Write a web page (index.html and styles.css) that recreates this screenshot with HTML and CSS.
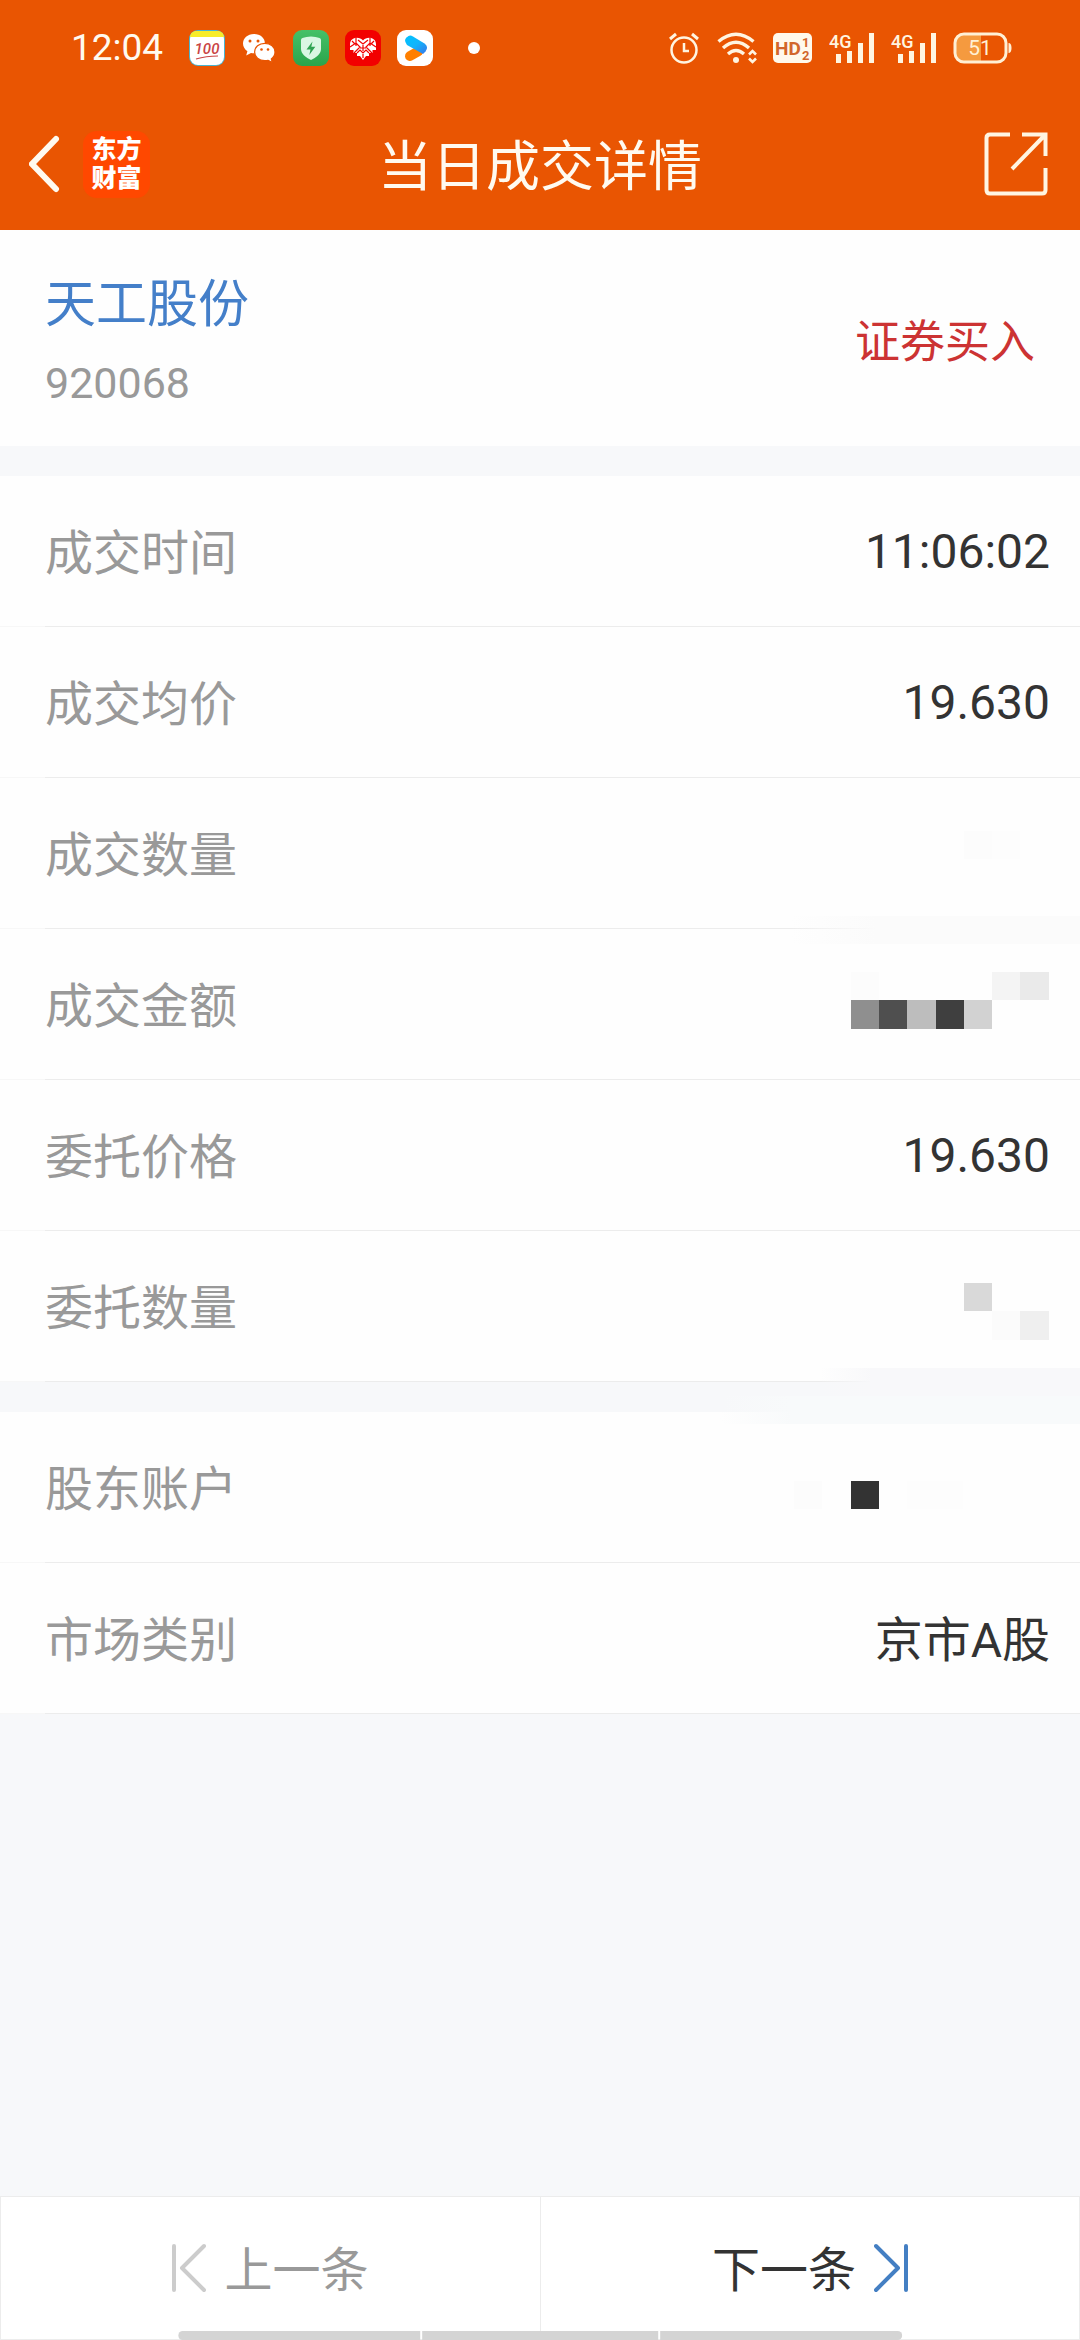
FILE: index.html
```html
<!DOCTYPE html>
<html lang="zh-CN">
<head>
    <meta charset="UTF-8">
    <meta name="viewport" content="width=device-width, initial-scale=1.0">
    <title>当日成交详情</title>
    <link rel="stylesheet" href="styles.css">
</head>
<body>

    <header class="header">
        <!-- Status bar -->
        <div class="status">
            <span class="clock">12:04</span>
            <div class="apps">
                <svg width="36" height="36" viewBox="0 0 36 36">
                    <rect width="36" height="36" rx="9" fill="#49b4cf"/>
                    <rect x="1" y="1" width="34" height="34" rx="8" fill="#fff"/>
                    <path d="M1 7V7a6 6 0 0 1 6-6H29a6 6 0 0 1 6 6Z" fill="#f8ec28"/>
                    <text x="18" y="24" class="hundred" text-anchor="middle">100</text>
                    <path d="M7 29Q17 26 29 26" stroke="#c94444" stroke-width="1.2" fill="none"/>
                </svg>
                <svg width="36" height="36" viewBox="0 0 36 36">
                    <path d="M13 4C6.500 4 2 8.300 2 13.600c0 3.200 1.700 5.900 4.400 7.600L5.200 25.500l4.800-2.600c1 .3 2 .4 3 .4C19.500 23.300 24 19 24 13.600S19.500 4 13 4Z" fill="#fff"/>
                    <path d="M23.800 13.300c-5.800 0-10.200 3.800-10.200 8.700s4.400 8.700 10.200 8.700c1.200 0 2.300-.1 3.300-.4l4.300 2.300-1.100-3.700c2.300-1.600 3.700-4.100 3.700-6.900 0-4.900-4.400-8.700-10.200-8.700Z" fill="#fff" stroke="#e95502" stroke-width="1.200"/>
                    <g fill="#e95502"><circle cx="9" cy="11" r="1.500"/><circle cx="17" cy="11" r="1.500"/><circle cx="20.500" cy="19.500" r="1.300"/><circle cx="27" cy="19.500" r="1.300"/></g>
                </svg>
                <svg width="36" height="36" viewBox="0 0 36 36">
                    <defs>
                        <linearGradient id="green" x2="0" y2="1"><stop stop-color="#45c168"/><stop offset="1" stop-color="#2aa44b"/></linearGradient>
                    </defs>
                    <rect width="36" height="36" rx="9" fill="url(#green)"/>
                    <path d="M18 6.500c3 0 6 .8 8.500 1.500q1.500.5 1.500 2v9c0 5-5 8.500-10 11-5-2.500-10-6-10-11v-9q0-1.500 1.500-2C12 7.300 15 6.500 18 6.500Z" fill="#d9f7e3"/>
                    <path d="M19.500 11.500 13.500 19.500h4l-1.200 5.500 6-8.200h-4Z" fill="#2fa352"/>
                </svg>
                <svg width="36" height="36" viewBox="0 0 36 36">
                    <rect width="36" height="36" rx="9" fill="#f20000"/>
                    <path d="M18 10.500C14.500 6 5 6.500 5 14.500v5.500h3.500v3h3.500v3h3l3 4 3-4h3v-3h3.500v-3H31v-5.500C31 6.500 21.500 6 18 10.500Z" fill="#fff"/>
                    <path d="M11 7v9M25 7v9M5 17l6-4 4 4-6 6M31 17l-6-4-4 4 6 6M13 10l5 4 5-4M18 15v6M15 18h6M12 23l3-3 3 3 3-3 3 3M18 24v4M7 11l3 3M29 11l-3 3" stroke="#f20000" stroke-width="1.200" fill="none"/>
                </svg>
                <svg width="36" height="36" viewBox="0 0 36 36">
                    <defs>
                        <linearGradient id="blue" x2="1" y2="1"><stop stop-color="#00c3ff"/><stop offset=".5" stop-color="#12b4fb"/><stop offset="1" stop-color="#3875e8"/></linearGradient>
                    </defs>
                    <rect width="36" height="36" rx="9" fill="#fff"/>
                    <path d="M13 26 21 21.500" stroke="#ff7f00" stroke-width="10" stroke-linecap="round"/>
                    <path d="M11.500 6Q13.500 5 16 6.500L27.500 13.500Q32 17 28.500 21.500L26 24 10 15Q5.500 9 11.500 6Z" fill="url(#blue)"/>
                </svg>
            </div>
            <span class="dot"></span>
            <div class="signals">
                <svg width="32" height="32" viewBox="0 0 32 32" fill="none" stroke="#fff5e1">
                    <circle cx="15" cy="18" r="12.500" stroke-width="2.500"/>
                    <path d="M1 7 7 2M29 7 23 2" stroke-width="3"/>
                    <path d="M15 11v8h5" stroke-width="2.500"/>
                </svg>
                <svg width="40" height="32" viewBox="0 0 40 32" fill="none" stroke="#fff5e1" stroke-width="3.400">
                    <path d="M1.500 9.500Q19 -5 36.500 9.500M6 16Q19 4.500 32 16M11 22Q19 15 27 22"/>
                    <circle cx="19" cy="28" r="3" fill="#fff5e1" stroke="none"/>
                    <path d="M32 22.500 35.500 19 39 22.500M32 26.500 35.500 30 39 26.500" stroke-width="2.600"/>
                </svg>
                <svg width="40" height="32" viewBox="0 0 40 32">
                    <rect x="0" y="1" width="39" height="30" rx="5" fill="#fff9ec"/>
                    <text x="2" y="23" class="hd">HD</text>
                    <text x="29" y="15" class="hd-small">1</text>
                    <text x="29" y="28" class="hd-small">2</text>
                </svg>
                <svg width="46" height="32" viewBox="0 0 46 32" fill="#fff5e1">
                    <text x="0" y="16" class="net">4G</text>
                    <path d="M7 22h5v9H7ZM18 19h5v12h-5ZM29 11h5v20h-5ZM40 1h5v30h-5Z"/>
                </svg>
                <svg width="46" height="32" viewBox="0 0 46 32" fill="#fff5e1">
                    <text x="0" y="16" class="net">4G</text>
                    <path d="M7 22h5v9H7ZM18 19h5v12h-5ZM29 11h5v20h-5ZM40 1h5v30h-5Z"/>
                </svg>
                <svg width="60" height="32" viewBox="0 0 60 32">
                    <path d="M28 3H12Q3 3 3 12v8q0 9 9 9H28Z" fill="#f59a3f"/>
                    <rect x="2" y="2" width="51" height="28" rx="9" fill="none" stroke="#fff0d5" stroke-width="3"/>
                    <path d="M55.500 11q3 0 3 5t-3 5Z" fill="#fff0d5"/>
                    <text x="27" y="23" text-anchor="middle" class="charge">51</text>
                </svg>
            </div>
        </div>

        <!-- Title bar -->
        <nav class="nav">
            <div class="nav-left">
                <button class="icon-btn" type="button" aria-label="返回">
                    <svg width="32" height="58" viewBox="0 0 32 58">
                        <path d="M27 4 3 29 27 54" fill="none" stroke="#fffaf0" stroke-width="6" stroke-linecap="round"/>
                    </svg>
                </button>
                <span class="logo">东方<br>财富</span>
            </div>
            <h1 class="title">当日成交详情</h1>
            <button class="icon-btn share" type="button" aria-label="分享">
                <svg width="67" height="64" viewBox="0 0 67 64" fill="none" stroke="#fff5e1" stroke-width="4">
                    <path d="M26 2.500H6Q2.500 2.500 2.500 6V58Q2.500 61.500 6 61.500H58Q61.500 61.500 61.500 58V36"/>
                    <path d="M38 2.500H61.500V24M61 3 28 37"/>
                </svg>
            </button>
        </nav>
    </header>

    <main class="main">
        <section class="stock">
            <div class="stock-info">
                <a class="stock-name" href="#">天工股份</a>
                <p class="stock-code">920068</p>
            </div>
            <span class="side">证券买入</span>
        </section>

        <dl class="group">
            <div class="row">
                <dt>成交时间</dt>
                <dd>11:06:02</dd>
            </div>
            <div class="row">
                <dt>成交均价</dt>
                <dd>19.630</dd>
            </div>
            <div class="row">
                <dt>成交数量</dt>
                <dd>
                    <svg class="mask" width="280" height="150" viewBox="0 0 280 150">
                        <rect x="194" y="53" width="28" height="28" fill="#fcfcfc"/>
                        <rect x="222" y="53" width="28" height="28" fill="#fdfdfd"/>
                    </svg>
                    <span class="smear"></span>
                </dd>
            </div>
            <div class="row">
                <dt>成交金额</dt>
                <dd>
                    <svg class="mask" width="280" height="150" viewBox="0 0 280 150">
                        <rect x="81" y="43" width="28" height="28" fill="#fcfcfc"/>
                        <rect x="222" y="43" width="28" height="28" fill="#f4f4f4"/>
                        <rect x="250" y="43" width="29" height="28" fill="#eaeaea"/>
                        <rect x="81" y="71" width="28" height="29" fill="#8f8f8f"/>
                        <rect x="109" y="71" width="28" height="29" fill="#4f4f4f"/>
                        <rect x="137" y="71" width="29" height="29" fill="#bdbdbd"/>
                        <rect x="166" y="71" width="28" height="29" fill="#3f3f3f"/>
                        <rect x="194" y="71" width="28" height="29" fill="#d2d2d2"/>
                    </svg>
                </dd>
            </div>
            <div class="row">
                <dt>委托价格</dt>
                <dd>19.630</dd>
            </div>
            <div class="row">
                <dt>委托数量</dt>
                <dd>
                    <svg class="mask" width="280" height="150" viewBox="0 0 280 150">
                        <rect x="194" y="52" width="28" height="28" fill="#d9d9d9"/>
                        <rect x="222" y="80" width="28" height="29" fill="#fbfbfb"/>
                        <rect x="250" y="80" width="29" height="29" fill="#efefef"/>
                    </svg>
                    <span class="smear smear-top"></span>
                    <span class="smear smear-bottom"></span>
                </dd>
            </div>
        </dl>

        <dl class="group">
            <div class="row">
                <dt>股东账户</dt>
                <dd>
                    <svg class="mask" width="280" height="150" viewBox="0 0 280 150">
                        <rect x="24" y="69" width="28" height="28" fill="#fcfcfc"/>
                        <rect x="81" y="69" width="28" height="28" fill="#333"/>
                        <rect x="137" y="69" width="56" height="28" fill="#fdfdfd"/>
                    </svg>
                </dd>
            </div>
            <div class="row">
                <dt>市场类别</dt>
                <dd class="cjk">京市A股</dd>
            </div>
        </dl>
    </main>

    <footer class="pager">
        <button class="pager-btn prev" type="button">
            <svg width="34" height="50" viewBox="0 0 34 50" fill="none" stroke="#ccc" stroke-width="4" stroke-linecap="round" stroke-linejoin="round">
                <path d="M2 3V47M32 3 10 25 32 47"/>
            </svg>
            <span class="cjk">上一条</span>
        </button>
        <button class="pager-btn next" type="button">
            <span class="cjk">下一条</span>
            <svg width="34" height="50" viewBox="0 0 34 50" fill="none" stroke="#447fc3" stroke-width="4" stroke-linecap="round" stroke-linejoin="round">
                <path d="M32 3V47M2 3 24 25 2 47"/>
            </svg>
        </button>
        <div class="gesture">
            <span></span>
            <span></span>
            <span></span>
        </div>
    </footer>

</body>
</html>
```
FILE: styles.css
```css
* {
    box-sizing: border-box;
}

body {
    margin: 0;
    min-height: 100vh;
    display: flex;
    flex-direction: column;
    background: #f7f8fa;
    color: #333;
    font-family: Roboto, "Noto Sans CJK SC", sans-serif;
    font-size: 48px;
}

button {
    border: none;
    background: none;
    padding: 0;
    font: inherit;
    color: inherit;
    cursor: pointer;
}

svg {
    display: block;
}

/* Header */
.header {
    background: #e95502;
    color: #fffaf0;
}

.status {
    display: flex;
    align-items: center;
    height: 102px;
    padding: 0 67px 6px 71px;
}

.clock {
    width: 118px;
    font-size: 37px;
    line-height: 48px;
}

.apps {
    display: flex;
    gap: 16px;
}

.dot {
    width: 12px;
    height: 12px;
    margin-left: 35px;
    border-radius: 50%;
    background: #fff;
}

.signals {
    display: flex;
    gap: 16px;
    margin-left: auto;
}

.hundred {
    font: italic 500 15px Roboto, sans-serif;
    fill: #c94444;
}

.hd {
    font: 700 19px Roboto, sans-serif;
    fill: #d2662b;
}

.hd-small {
    font: 700 13px Roboto, sans-serif;
    fill: #d2662b;
}

.net {
    font: 500 18px Roboto, sans-serif;
}

.charge {
    font: 400 21px Roboto, sans-serif;
    fill: #fff0d5;
}

.nav {
    display: grid;
    grid-template-columns: 1fr auto 1fr;
    align-items: center;
    height: 128px;
    padding: 0 29px 4px;
}

.nav-left {
    display: flex;
    align-items: center;
    gap: 22px;
}

.logo {
    width: 67px;
    height: 67px;
    padding-top: 4px;
    border-radius: 14px;
    background: #ff4800;
    color: #fff;
    font-size: 25px;
    font-weight: 900;
    line-height: 29px;
    text-align: center;
}

.title {
    margin: 0;
    padding-top: 8px;
    font-size: 54px;
    font-weight: 400;
    line-height: 64px;
}

.share {
    justify-self: end;
}

/* Stock summary */
.stock {
    display: flex;
    align-items: center;
    justify-content: space-between;
    height: 216px;
    padding: 0 45px;
    background: #fefefe;
}

.stock-info {
    padding-top: 6px;
}

.stock-name {
    display: block;
    color: #447fc9;
    font-size: 51px;
    line-height: 76px;
    text-decoration: none;
}

.stock-code {
    margin: 8px 0 0;
    color: #999;
    font-size: 43px;
    line-height: 64px;
}

.side {
    color: #cc3333;
    font-size: 45px;
}

/* Detail rows */
.group {
    margin: 30px 0 0;
    background: #fefefe;
}

.row {
    position: relative;
    display: flex;
    align-items: center;
    justify-content: space-between;
    height: 151px;
    padding: 0 30px 0 45px;
    border-bottom: 1px solid #f7f7f7;
}

.row::after {
    content: "";
    position: absolute;
    left: 45px;
    right: 0;
    bottom: -1px;
    height: 1px;
    background: #ececec;
}

.row dt {
    color: #999;
}

.row dd {
    margin: 0;
}

.row dt,
.cjk {
    padding-bottom: 4px;
}

/* Faded strips that lie over the row border */
.smear {
    position: absolute;
    z-index: 1;
    right: 0;
    bottom: -16px;
    width: 290px;
    height: 28px;
    background: linear-gradient(to right, transparent, #fbfbfb 30%);
}

.smear-top {
    bottom: -15px;
    width: 260px;
    background: linear-gradient(to right, transparent, #f8f8fa 20%);
}

.smear-bottom {
    bottom: -43px;
    width: 360px;
    background: linear-gradient(to right, transparent, #f8fafb 20%);
}

/* Pager */
.pager {
    position: relative;
    display: grid;
    grid-template-columns: 1fr 1fr;
    margin-top: auto;
}

.pager-btn {
    display: flex;
    align-items: center;
    justify-content: center;
    gap: 18px;
    height: 144px;
    border: 1px solid #ececec;
    background: #fff;
}

.prev {
    color: #999;
    border-right: none;
}

.gesture {
    position: absolute;
    left: 50%;
    bottom: 0;
    display: grid;
    grid-template-columns: 242fr 237fr 242fr;
    gap: 2px;
    width: 67%;
    height: 9px;
    border-radius: 5px;
    overflow: hidden;
    transform: translateX(-50%);
}

.gesture span {
    background: #d4d4d4;
}
```
